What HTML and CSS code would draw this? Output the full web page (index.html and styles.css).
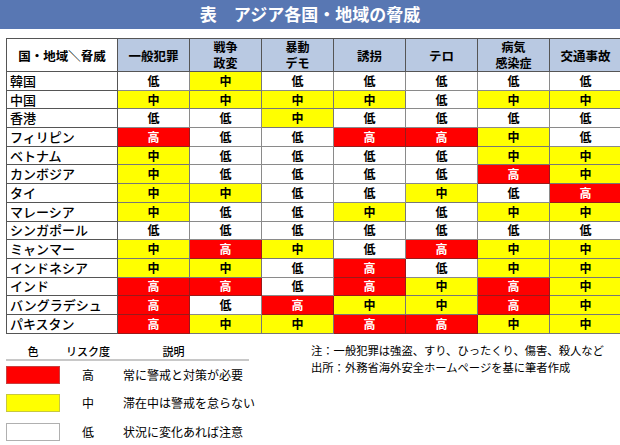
FILE: index.html
```html
<!DOCTYPE html>
<html lang="ja">
<head>
<meta charset="utf-8">
<link rel="stylesheet" href="styles.css">
</head>
<body>
<div class="titlebar">表　アジア各国・地域の脅威</div>
<table class="threats">
  <thead>
    <tr>
      <th class="corner">国・地域＼脅威</th>
      <th>一般犯罪</th>
      <th><span class="hl">戦争</span><span class="hl">政変</span></th>
      <th><span class="hl">暴動</span><span class="hl">デモ</span></th>
      <th>誘拐</th>
      <th>テロ</th>
      <th><span class="hl">病気</span><span class="hl">感染症</span></th>
      <th>交通事故</th>
    </tr>
  </thead>
  <tbody>
    <tr><td class="name">韓国</td><td>低</td><td class="m">中</td><td>低</td><td>低</td><td>低</td><td>低</td><td>低</td></tr>
    <tr><td class="name">中国</td><td class="m">中</td><td class="m">中</td><td class="m">中</td><td class="m">中</td><td>低</td><td class="m">中</td><td class="m">中</td></tr>
    <tr><td class="name">香港</td><td>低</td><td>低</td><td class="m">中</td><td>低</td><td>低</td><td>低</td><td>低</td></tr>
    <tr><td class="name">フィリピン</td><td class="h">高</td><td>低</td><td>低</td><td class="h">高</td><td class="h">高</td><td class="m">中</td><td>低</td></tr>
    <tr><td class="name">ベトナム</td><td class="m">中</td><td>低</td><td>低</td><td>低</td><td>低</td><td class="m">中</td><td class="m">中</td></tr>
    <tr><td class="name">カンボジア</td><td class="m">中</td><td>低</td><td>低</td><td>低</td><td>低</td><td class="h">高</td><td class="m">中</td></tr>
    <tr><td class="name">タイ</td><td class="m">中</td><td class="m">中</td><td>低</td><td>低</td><td class="m">中</td><td>低</td><td class="h">高</td></tr>
    <tr><td class="name">マレーシア</td><td class="m">中</td><td>低</td><td>低</td><td class="m">中</td><td>低</td><td class="m">中</td><td class="m">中</td></tr>
    <tr><td class="name">シンガポール</td><td>低</td><td>低</td><td>低</td><td>低</td><td>低</td><td>低</td><td>低</td></tr>
    <tr><td class="name">ミャンマー</td><td class="m">中</td><td class="h">高</td><td class="m">中</td><td>低</td><td class="h">高</td><td class="m">中</td><td class="m">中</td></tr>
    <tr><td class="name">インドネシア</td><td class="m">中</td><td class="m">中</td><td>低</td><td class="h">高</td><td>低</td><td class="m">中</td><td class="m">中</td></tr>
    <tr><td class="name">インド</td><td class="h">高</td><td class="h">高</td><td>低</td><td class="h">高</td><td class="m">中</td><td class="h">高</td><td class="m">中</td></tr>
    <tr><td class="name">バングラデシュ</td><td class="h">高</td><td>低</td><td class="h">高</td><td class="m">中</td><td class="m">中</td><td class="h">高</td><td class="m">中</td></tr>
    <tr><td class="name">パキスタン</td><td class="h">高</td><td class="m">中</td><td class="m">中</td><td class="h">高</td><td class="h">高</td><td class="m">中</td><td class="m">中</td></tr>
  </tbody>
</table>
<div class="bottom">
  <div class="legend">
    <div class="lg-header">
      <div class="lg-head">色</div>
      <div class="lg-head">リスク度</div>
      <div class="lg-head desc-head">説明</div>
    </div>
    <div class="lg-rows">
      <div class="lg-row"><div class="swatch sw-h"></div><div class="lv">高</div><div class="desc">常に警戒と対策が必要</div></div>
      <div class="lg-row"><div class="swatch sw-m"></div><div class="lv">中</div><div class="desc">滞在中は警戒を怠らない</div></div>
      <div class="lg-row"><div class="swatch sw-l"></div><div class="lv">低</div><div class="desc">状況に変化あれば注意</div></div>
    </div>
  </div>
  <div class="notes">
    <p>注：一般犯罪は強盗、すり、ひったくり、傷害、殺人など</p>
    <p>出所：外務省海外安全ホームページを基に筆者作成</p>
  </div>
</div>
</body>
</html>
```
FILE: styles.css
```css
html, body {
  margin: 0;
  padding: 0;
  background: #ffffff;
}
body {
  width: 620px;
  height: 445px;
  overflow: hidden;
  font-family: "Noto Sans CJK JP", "Noto Sans", sans-serif;
  color: #000;
}
.titlebar {
  height: 29px;
  background: #5877b3;
  color: #ffffff;
  font-size: 17px;
  font-weight: bold;
  line-height: 28px;
  text-align: center;
}
.threats {
  margin: 9px 0 0 6px;
  border-collapse: collapse;
  table-layout: fixed;
  width: 608px;
  border: 1px solid #3a3a3a;
}
.threats th {
  background: #b9c9e2;
  border: 1px solid #555;
  height: 32px;
  padding: 0;
  font-size: 12.5px;
  font-weight: bold;
  line-height: 15px;
  width: 71px;
  text-align: center;
  vertical-align: middle;
}
.threats th .hl {
  display: block;
  font-size: 12px;
  line-height: 16px;
}
.threats th.corner {
  background: #ffffff;
  width: 110px;
}
.threats td {
  border: 1px solid #8a8a8a;
  height: 17.7px;
  padding: 0;
  font-size: 12px;
  font-weight: bold;
  line-height: 14px;
  text-align: center;
  background: #ffffff;
}
.threats td.name {
  text-align: left;
  padding-left: 3px;
  font-size: 13px;
  font-weight: 500;
  border-color: #555;
}
.threats td.m {
  background: #ffff00;
  border-color: #777;
}
.threats td.h {
  background: #ff0000;
  color: #ffffff;
  border-color: #9a1a1a;
}
.bottom {
  display: flex;
  margin-top: 10px;
  padding-left: 6px;
}
.legend {
  width: 243px;
  font-size: 11px;
}
.lg-header {
  display: grid;
  grid-template-columns: 54px 56px 133px;
  border-bottom: 2px solid #c8c8c8;
}
.lg-head {
  text-align: center;
  line-height: 15px;
  font-weight: 500;
}
.desc-head {
  padding-right: 18px;
}
.lg-rows {
  display: flex;
  flex-direction: column;
  gap: 10.5px;
  margin-top: 5px;
}
.lg-row {
  display: grid;
  grid-template-columns: 54px 56px 133px;
  height: 18px;
  align-items: center;
}
.swatch {
  height: 18px;
  box-sizing: border-box;
}
.sw-h {
  background: #ff0000;
  border: 1px solid #c84040;
}
.sw-m {
  background: #ffff00;
  border: 1px solid #c8c840;
}
.sw-l {
  background: #ffffff;
  border: 1px solid #b0b0b0;
}
.lv, .desc {
  font-size: 12px;
  line-height: 18px;
}
.lv {
  text-align: center;
}
.desc {
  padding-left: 7px;
  white-space: nowrap;
}
.notes {
  margin-left: 62px;
  margin-top: -2px;
  font-size: 11.3px;
  line-height: 17px;
}
.notes p {
  margin: 0;
  white-space: nowrap;
}
```
